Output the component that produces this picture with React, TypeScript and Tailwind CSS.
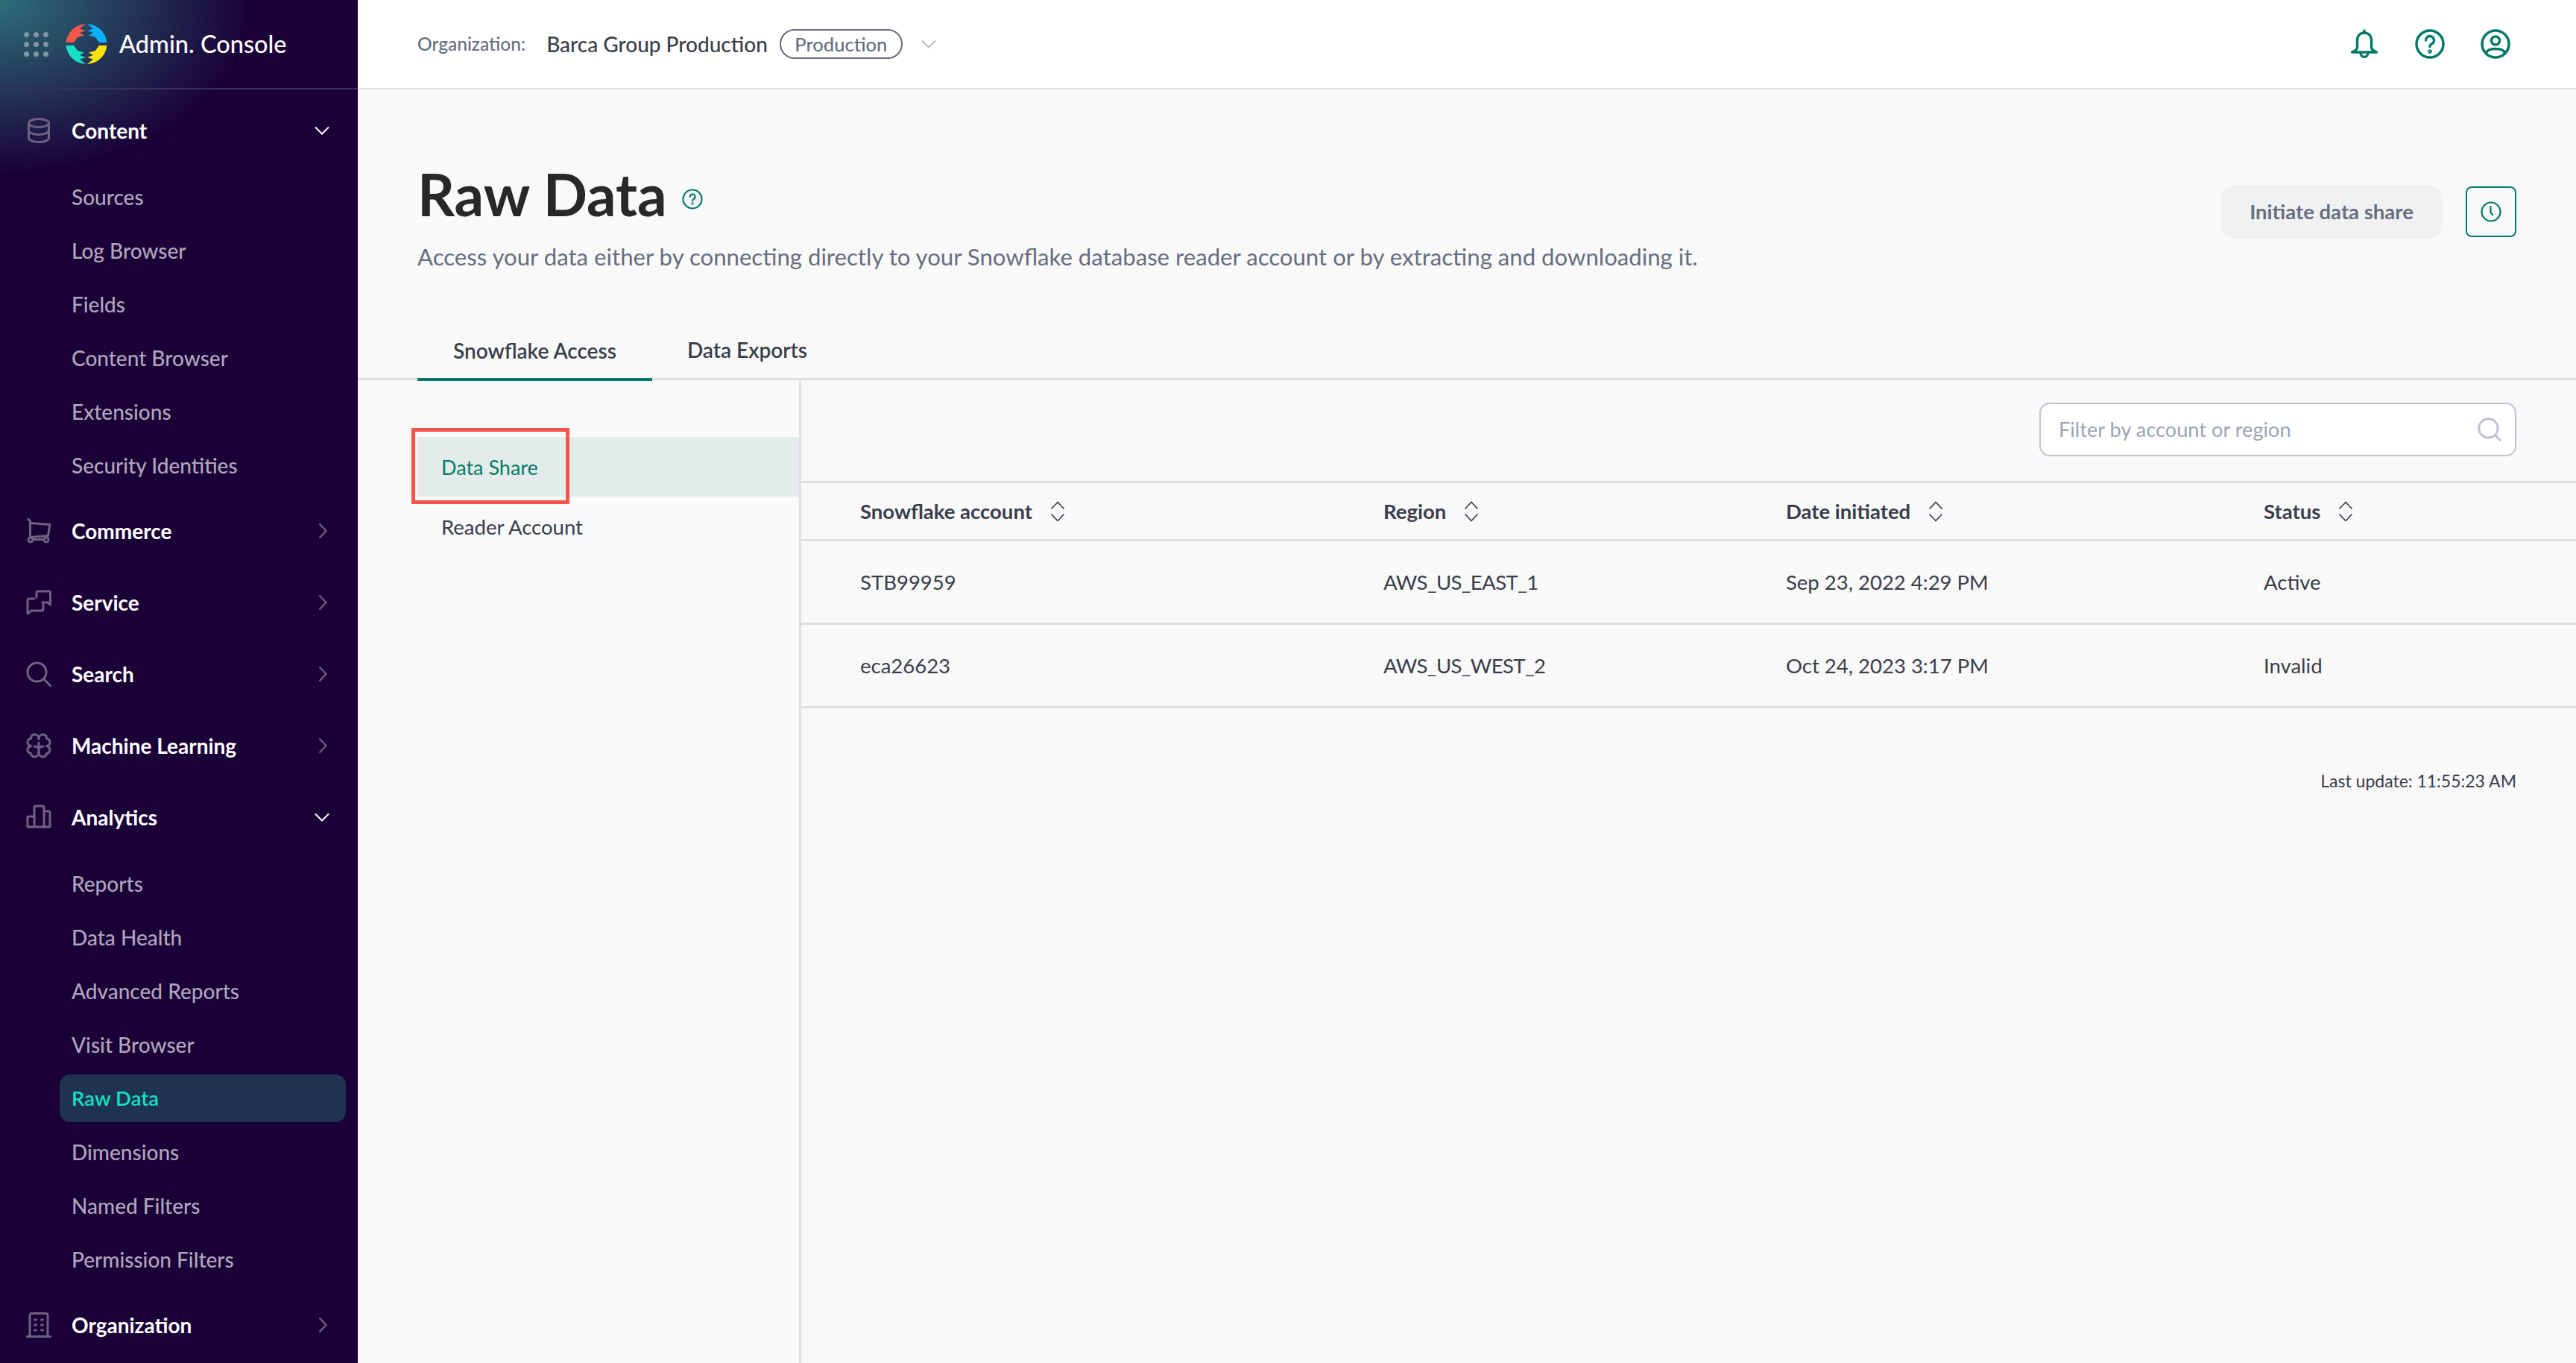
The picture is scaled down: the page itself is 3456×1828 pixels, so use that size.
import { Search } from "lucide-react";

const font = "font-['Lato','Liberation_Sans',sans-serif]";

type IconProps = { className?: string };

function Icon({ className, w, h, children }: IconProps & { w: number; h: number; children: React.ReactNode }) {
  return (
    <svg
      width={w}
      height={h}
      viewBox={`0 0 ${w} ${h}`}
      fill="none"
      stroke="currentColor"
      strokeWidth={3}
      strokeLinecap="round"
      strokeLinejoin="round"
      className={className}
    >
      {children}
    </svg>
  );
}

function DatabaseIcon() {
  return (
    <Icon w={34} h={34}>
      <ellipse cx="17" cy="7" rx="13.5" ry="5.5" />
      <path d="M3.5 7v20c0 3 6 5.5 13.5 5.5s13.5-2.500 13.500-5.500V7" />
      <path d="M3.500 17c0 3 6 5.500 13.500 5.500s13.500-2.500 13.500-5.500" />
    </Icon>
  );
}

function CartIcon() {
  return (
    <Icon w={34} h={34}>
      <path d="M3 1.500l2.500 2V25" />
      <path d="M5.500 6.500l26.500 2-2.500 15-24 2" />
      <circle cx="6" cy="29" r="3" />
      <circle cx="27" cy="29" r="3" />
      <path d="M9 28.500h15" />
    </Icon>
  );
}

function ChatIcon() {
  return (
    <Icon w={34} h={34}>
      <path d="M14 10V4a2 2 0 0 1 2-2h15a1.500 1.500 0 0 1 1.500 1.500V20l-4-3H22" />
      <path d="M11 12H4a2 2 0 0 0-2 2v18l5-4h14a2 2 0 0 0 2-2v-7" />
    </Icon>
  );
}

function SearchNavIcon() {
  return (
    <Icon w={34} h={34}>
      <circle cx="14.500" cy="14.500" r="12.500" />
      <path d="M24 24l9 9" />
    </Icon>
  );
}

function BrainIcon() {
  return (
    <Icon w={34} h={34}>
      <path d="M17 8c0-4-3-6-5.500-6C8.500 2 6.500 4 6.500 7.500 3.500 8 2 10.500 2 13c0 2 1.500 3.500 4.500 4.500C3.500 18.500 2 20 2 22c0 3 1.500 5 4.500 5.500.5 3 2.500 4.500 5 4.500s5.500-2 5.500-6" />
      <path d="M17 8c0-4 3-6 5.500-6 3 0 5 2 5 5.500C30.500 8 32 10.500 32 13c0 2-1.500 3.500-4.500 4.500 3 1 4.500 2.500 4.500 4.500 0 3-1.500 5-4.500 5.500-.5 3-2.500 4.500-5 4.500S17 30 17 26" />
      <path d="M17 13v13M11 18c3 0 5 1 6 3 1-2 3-3 6-3" />
    </Icon>
  );
}

function BarsIcon() {
  return (
    <Icon w={34} h={34}>
      <path d="M11 16H4a2 2 0 0 0-2 2v12h30V11a2 2 0 0 0-2-2h-6" />
      <path d="M11 30V4a2 2 0 0 1 2-2h9a2 2 0 0 1 2 2v26" />
    </Icon>
  );
}

function BuildingIcon() {
  return (
    <Icon w={34} h={34}>
      <path d="M1.500 32.500h31" />
      <path d="M5 32V4a2.500 2.500 0 0 1 2.500-2.500h19A2.500 2.500 0 0 1 29 4v28" />
      <path d="M11.500 10h2M20.500 10h2M11.500 17h2M20.500 17h2M11.500 24h2M20.500 24h2" />
    </Icon>
  );
}

function ChevronDown({ className }: IconProps) {
  return (
    <svg width="20" height="12" viewBox="0 0 20 12" fill="none" stroke="currentColor" strokeWidth={2} className={className}>
      <path d="M1 1.500l9 9 9-9" />
    </svg>
  );
}

function ChevronRight({ className }: IconProps) {
  return (
    <svg width="12" height="22" viewBox="0 0 12 22" fill="none" stroke="currentColor" strokeWidth={2.2} className={className}>
      <path d="M1.500 1.500l9 9.500-9 9.500" />
    </svg>
  );
}

function SortIcon() {
  return (
    <svg width="20" height="28" viewBox="0 0 20 28" fill="none" stroke="currentColor" strokeWidth={1.8} className="text-[#3f4250]">
      <path d="M1.500 10.500L10 1.500l8.500 9M1.500 17.500l8.500 9 8.500-9" />
    </svg>
  );
}

function Logo() {
  const hand = "M27 1 L19 7.500 L27 10 L19 13 L25 16.500 L16 19 L11 26 L0.500 26 A28 28 0 0 1 27 1 Z";
  return (
    <svg width="56" height="56" viewBox="0 0 56 56">
      <path d={hand} fill="#f2564a" />
      <path d={hand} fill="#0bb0ff" transform="translate(56 0) scale(-1 1)" />
      <path d={hand} fill="#17e0c4" transform="translate(0 56) scale(1 -1)" />
      <path d={hand} fill="#ffe10a" transform="rotate(180 28 28)" />
    </svg>
  );
}

function GridDots() {
  const spots = [3.500, 16.500, 29.500];
  return (
    <svg width="33" height="33" viewBox="0 0 33 33" className="text-[#8494a2]" fill="currentColor">
      {spots.map((y) => spots.map((x) => <circle key={`${x}-${y}`} cx={x} cy={y} r="3.500" />))}
    </svg>
  );
}

type NavGroup = {
  label: string;
  icon: React.ReactNode;
  open?: boolean;
  items?: string[];
};

const nav: NavGroup[] = [
  {
    label: "Content",
    icon: <DatabaseIcon />,
    open: true,
    items: ["Sources", "Log Browser", "Fields", "Content Browser", "Extensions", "Security Identities"],
  },
  { label: "Commerce", icon: <CartIcon /> },
  { label: "Service", icon: <ChatIcon /> },
  { label: "Search", icon: <SearchNavIcon /> },
  { label: "Machine Learning", icon: <BrainIcon /> },
  {
    label: "Analytics",
    icon: <BarsIcon />,
    open: true,
    items: ["Reports", "Data Health", "Advanced Reports", "Visit Browser", "Raw Data", "Dimensions", "Named Filters", "Permission Filters"],
  },
  { label: "Organization", icon: <BuildingIcon /> },
];

function Sidebar() {
  return (
    <aside className="w-[480px] shrink-0 h-full overflow-hidden bg-[#1a0037] bg-[radial-gradient(ellipse_340px_235px_at_0_0,#2d6f79,#1a0037)]">
      <div className="h-[120px] border-b-2 border-[#393057] flex items-center pl-[32px]">
        <GridDots />
        <div className="ml-[23px]">
          <Logo />
        </div>
        <span className="ml-[16px] text-[32.5px] font-medium text-white">Admin. Console</span>
      </div>
      <nav className="pt-[7px]">
        {nav.map((group) => (
          <div key={group.label}>
            <div className="h-[96px] flex items-center pl-[35px] pr-[38px] text-[#6f6184]">
              <span className="w-[34px] flex justify-center">{group.icon}</span>
              <span className="ml-[27px] flex-1 text-[28px] font-bold text-white">{group.label}</span>
              {group.open ? <ChevronDown className="text-white" /> : <ChevronRight className="mr-[3px]" />}
            </div>
            {group.items && (
              <ul className="pt-[5px] pb-[4px]">
                {group.items.map((item) =>
                  item === "Raw Data" ? (
                    <li key={item} className="h-[72px] flex items-center">
                      <span className="ml-[80px] mr-[16px] pl-[16px] flex-1 h-[64px] flex items-center rounded-[14px] bg-[#1f334e] text-[#14e0c4] text-[27.5px] font-semibold">
                        {item}
                      </span>
                    </li>
                  ) : (
                    <li key={item} className="h-[72px] flex items-center pl-[96px] text-[28px] font-medium text-[#b0a6bd]">
                      {item}
                    </li>
                  ),
                )}
              </ul>
            )}
          </div>
        ))}
      </nav>
    </aside>
  );
}

const columns = ["Snowflake account", "Region", "Date initiated", "Status"];

const rows = [
  ["STB99959", "AWS_US_EAST_1", "Sep 23, 2022 4:29 PM", "Active"],
  ["eca26623", "AWS_US_WEST_2", "Oct 24, 2023 3:17 PM", "Invalid"],
];

const gridCols = "grid grid-cols-[702px_540px_641px_1fr] pl-[79px]";

function Topbar() {
  return (
    <header className="h-[120px] shrink-0 bg-white border-b-2 border-[#e1e2e8] flex items-center pl-[80px] pr-[88px]">
      <span className="text-[24.5px] font-medium text-[#676d7e]">Organization:</span>
      <span className="ml-[28px] text-[28px] font-medium text-[#3a3d4a]">Barca Group Production</span>
      <span className="ml-[16px] h-[40px] w-[165px] flex items-center justify-center rounded-full border-2 border-[#676d7e] text-[25.5px] font-medium text-[#676d7e]">
        Production
      </span>
      <ChevronDown className="ml-[25px] text-[#b9bdc9]" />
      <div className="ml-auto flex items-center gap-[48px] text-[#037a68]">
        <svg width="40" height="40" viewBox="0 0 40 40" fill="none" stroke="currentColor" strokeWidth={3.500} strokeLinecap="round" strokeLinejoin="round">
          <path d="M20 5c-6 0-9.500 4.500-9.500 10v9c0 3-1.500 4.500-7 7h33c-5.500-2.500-7-4-7-7v-9c0-5.500-3.500-10-9.500-10z" />
          <path d="M20 5V2" />
          <path d="M15 31.500a5 6 0 0 0 10 0" />
        </svg>
        <svg width="40" height="40" viewBox="0 0 40 40" fill="none" stroke="currentColor" strokeWidth={3.500} strokeLinecap="round" strokeLinejoin="round">
          <circle cx="20" cy="20" r="18" />
          <path d="M14.500 15a5.500 5.500 0 1 1 7.800 5c-1.500.8-2.300 1.500-2.300 3.500" />
          <circle cx="20" cy="30" r="1" />
        </svg>
        <svg width="40" height="40" viewBox="0 0 40 40" fill="none" stroke="currentColor" strokeWidth={3.500} strokeLinecap="round" strokeLinejoin="round">
          <circle cx="20" cy="20" r="18" />
          <circle cx="20" cy="15.500" r="5.500" />
          <path d="M7.500 32c1-4 5-5.500 12.500-5.500S31.500 28 32.500 32" />
        </svg>
      </div>
    </header>
  );
}

function PageHeading() {
  return (
    <div className="h-[310px] shrink-0 flex justify-between pl-[80px] pr-[80px]">
      <div>
        <div className="mt-[85px] flex items-center">
          <h1 className="text-[78px] leading-[110px] font-bold text-[#28282b]">Raw Data</h1>
          <svg width="28" height="28" viewBox="0 0 28 28" fill="none" stroke="#037a68" strokeWidth={2.200} strokeLinecap="round" className="ml-[20px] mt-[14px]">
            <circle cx="14" cy="14" r="12.500" />
            <path d="M10.500 11a3.500 3.500 0 1 1 5 3.200c-1 .5-1.500 1-1.500 2.300" />
            <circle cx="14" cy="20" r=".6" />
          </svg>
        </div>
        <p className="mt-[7px] text-[31.15px] leading-[44px] text-[#676d7e]">
          Access your data either by connecting directly to your Snowflake database reader account or by extracting and downloading it.
        </p>
      </div>
      <div className="mt-[128px] flex items-start gap-[32px]">
        <button className="h-[72px] w-[296px] rounded-[16px] bg-[#f0f1f3] text-[27.500px] font-bold text-[#676d7e]">Initiate data share</button>
        <button className="mt-[2px] h-[68px] w-[68px] rounded-[8px] border-[2.500px] border-[#037a68] flex items-center justify-center">
          <svg width="28" height="28" viewBox="0 0 28 28" fill="none" stroke="#037a68" strokeWidth={2.200} strokeLinecap="round" strokeLinejoin="round">
            <circle cx="14" cy="14" r="12.500" />
            <path d="M13.500 7v8l2.500 3" />
          </svg>
        </button>
      </div>
    </div>
  );
}

function Tabs() {
  return (
    <div className="h-[80px] shrink-0 flex border-b-[3px] border-[#dfe0e5] pl-[80px]">
      <div className="h-[81px] px-[48px] pt-[3px] flex items-center border-b-[4px] border-[#037a68] text-[28px] font-semibold text-[#3a3d4a]">
        Snowflake Access
      </div>
      <div className="pl-[47px] pr-[48px] flex items-center text-[28px] font-semibold text-[#3a3d4a]">Data Exports</div>
    </div>
  );
}

function LeftPanel() {
  return (
    <div className="relative w-[595px] shrink-0 pl-[80px] pt-[76px] border-r-[3px] border-[#dfe0e5]">
      <div className="h-[80px] pl-[32px] pt-[2px] flex items-center bg-[#e3ecea] text-[27px] text-[#037a68]">Data Share</div>
      <div className="h-[80px] pl-[32px] pt-[2px] flex items-center text-[27.500px] text-[#3a3d4a]">Reader Account</div>
      <div className="absolute left-[72px] top-[64px] w-[212px] h-[102px] border-[5px] border-[#f2564a]" />
    </div>
  );
}

function DataTable() {
  return (
    <div className="flex-1 min-w-0">
      <div className="h-[135px] pt-[30px] pr-[80px] flex justify-end items-start">
        <div className="w-[640px] h-[72px] rounded-[14px] border-[2.500px] border-[#bfc3cf] bg-white flex items-center pl-[24px] pr-[15px]">
          <span className="flex-1 text-[27.200px] text-[#9ca3b4]">Filter by account or region</span>
          <Search size={38} strokeWidth={1.900} className="text-[#bfc3cf]" />
        </div>
      </div>
      <div className={`${gridCols} h-[81px] items-center border-y-[3px] border-[#dfe0e5]`}>
        {columns.map((c) => (
          <div key={c} className="flex items-center gap-[24px] text-[27.500px] font-bold text-[#3a3d4a]">
            {c}
            <SortIcon />
          </div>
        ))}
      </div>
      {rows.map((row) => (
        <div key={row[0]} className={`${gridCols} h-[112px] items-center border-b-[3px] border-[#dfe0e5] text-[27.500px] text-[#3a3d4a]`}>
          {row.map((cell, i) => (
            <div key={cell} className={i === 1 ? "tracking-[-0.6px]" : ""}>
              {cell}
            </div>
          ))}
        </div>
      ))}
      <div className="mt-[80px] pr-[80px] text-right text-[23px] text-[#3a3d4a]">Last update: 11:55:23 AM</div>
    </div>
  );
}

export default function App() {
  return (
    <div className={`${font} flex w-full h-screen overflow-hidden bg-[#f9f9fa]`}>
      <Sidebar />
      <main className="flex-1 min-w-0 flex flex-col">
        <Topbar />
        <PageHeading />
        <Tabs />
        <div className="flex-1 flex">
          <LeftPanel />
          <DataTable />
        </div>
      </main>
    </div>
  );
}
